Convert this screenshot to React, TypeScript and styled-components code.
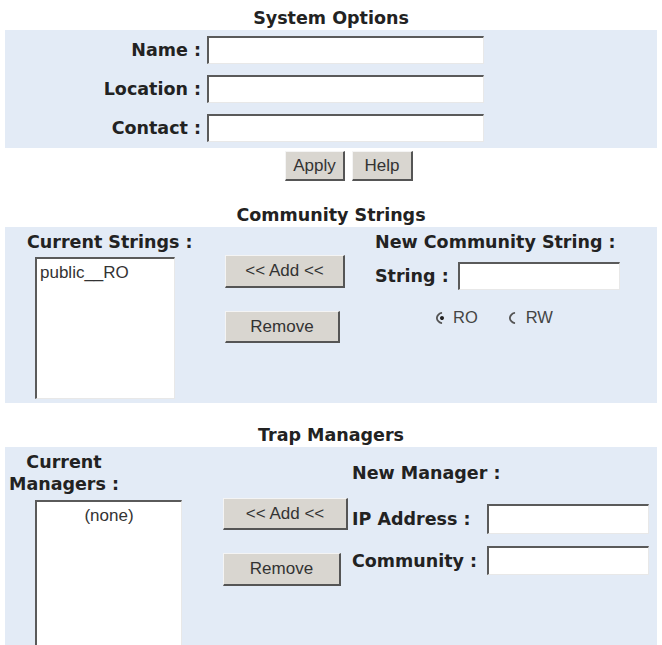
import styled, {createGlobalStyle} from 'styled-components';

const GlobalStyle = createGlobalStyle`
    body {
        margin: 0;
        background: #ffffff;
        color: #1e1e1e;
        font-family: "Liberation Sans", Arial, sans-serif;
    }
`;

const Page = styled.div`
    width: 662px;
    height: 645px;
    overflow: hidden;
`;

const Title = styled.div<{$top: number}>`
    margin-top: ${p => p.$top}px;
    height: 24px;
    line-height: 24px;
    text-align: center;
    font-family: "DejaVu Sans", Verdana, sans-serif;
    font-weight: bold;
    font-size: 17.5px;
    color: #222;
`;

const Panel = styled.div`
    margin: 0 5px;
    background: #e3ebf6;
`;

const Label = styled.span`
    font-family: "DejaVu Sans", Verdana, sans-serif;
    font-weight: bold;
    font-size: 17.5px;
    color: #222;
    white-space: nowrap;
`;

const TextInput = styled.input<{$w: number; $h: number}>`
    box-sizing: border-box;
    width: ${p => p.$w}px;
    height: ${p => p.$h}px;
    background: #fff;
    border-style: solid;
    border-width: 2px 1px 1px 2px;
    border-color: #5a5a5a #e8e8e8 #e8e8e8 #5a5a5a;
    outline: none;
    padding: 0 3px;
    font-size: 16px;
`;

const ListBox = styled.div<{$w: number; $h: number; $center?: boolean}>`
    box-sizing: border-box;
    width: ${p => p.$w}px;
    height: ${p => p.$h}px;
    background: #fff;
    border-style: solid;
    border-width: 2px 1px 1px 2px;
    border-color: #5a5a5a #e8e8e8 #e8e8e8 #5a5a5a;
    padding: 4px 3px;
    font-size: 17px;
    line-height: 20px;
    text-align: ${p => (p.$center ? 'center' : 'left')};
    color: #333;
`;

const Button = styled.button<{$w: number; $h: number}>`
    box-sizing: border-box;
    width: ${p => p.$w}px;
    height: ${p => p.$h}px;
    background: #d9d6d0;
    border-style: solid;
    border-width: 1px 2px 2px 1px;
    border-color: #f4f4f4 #555 #555 #f4f4f4;
    font-family: "Liberation Sans", Arial, sans-serif;
    font-size: 17px;
    color: #333;
    padding: 0;
    cursor: pointer;
`;

/* System options */

const OptionsGrid = styled.div`
    display: grid;
    grid-template-columns: 196px auto;
    column-gap: 6px;
    row-gap: 11px;
    align-items: center;
    padding: 6px 0 6px;
`;

const RightLabel = styled(Label)`
    text-align: right;
`;

const ButtonRow = styled.div`
    display: flex;
    justify-content: center;
    gap: 7px;
    padding-left: 36px;
    margin-top: 3px;
`;

/* Community / trap panels */

const SplitPanel = styled(Panel)<{$h: number}>`
    display: flex;
    height: ${p => p.$h}px;
`;

const Column = styled.div<{$w: number; $pl: number}>`
    width: ${p => p.$w}px;
    padding-left: ${p => p.$pl}px;
    box-sizing: border-box;
    display: flex;
    flex-direction: column;
`;

const ColumnHead = styled(Label)<{$mt: number}>`
    margin-top: ${p => p.$mt}px;
    line-height: 22px;
`;

const StackedHead = styled(Label)`
    width: 112px;
    margin-top: 4px;
    text-align: center;
    line-height: 22px;
`;

const Spaced = styled.div<{$mt: number; $ml?: number}>`
    margin-top: ${p => p.$mt}px;
    margin-left: ${p => p.$ml ?? 0}px;
`;

const FieldRow = styled.div<{$mt: number; $lw: number}>`
    display: grid;
    grid-template-columns: ${p => p.$lw}px auto;
    column-gap: 7px;
    align-items: center;
    margin-top: ${p => p.$mt}px;
`;

const RadioRow = styled.div`
    display: flex;
    align-items: center;
    margin-top: 18px;
    padding-left: 61px;
    font-size: 16.5px;
    color: #444;
`;

const RadioOption = styled.label`
    display: flex;
    align-items: center;
    gap: 5px;
    margin-right: 31px;
`;

const RadioMark = styled.span<{$on?: boolean}>`
    position: relative;
    box-sizing: border-box;
    width: 12px;
    height: 12px;
    border-radius: 50%;
    border: 2px solid;
    border-color: #555 transparent transparent #555;
    transform: rotate(-45deg);
    &::after {
        content: '';
        display: ${p => (p.$on ? 'block' : 'none')};
        position: absolute;
        left: 2px;
        top: 2px;
        width: 4px;
        height: 4px;
        border-radius: 50%;
        background: #222;
    }
`;

export default function App() {
    return (
        <Page>
            <GlobalStyle />
            <Title $top={6}>System Options</Title>
            <Panel>
                <OptionsGrid>
                    <RightLabel>Name :</RightLabel>
                    <TextInput $w={277} $h={28} />
                    <RightLabel>Location :</RightLabel>
                    <TextInput $w={277} $h={28} />
                    <RightLabel>Contact :</RightLabel>
                    <TextInput $w={277} $h={28} />
                </OptionsGrid>
            </Panel>
            <ButtonRow>
                <Button $w={60} $h={30}>Apply</Button>
                <Button $w={61} $h={30}>Help</Button>
            </ButtonRow>

            <Title $top={22}>Community Strings</Title>
            <SplitPanel $h={176}>
                <Column $w={215} $pl={22}>
                    <ColumnHead $mt={4}>Current Strings :</ColumnHead>
                    <Spaced $mt={4} $ml={8}>
                        <ListBox $w={140} $h={142}>public__RO</ListBox>
                    </Spaced>
                </Column>
                <Column $w={150} $pl={5}>
                    <Spaced $mt={28}>
                        <Button $w={120} $h={33}>&lt;&lt; Add &lt;&lt;</Button>
                    </Spaced>
                    <Spaced $mt={23}>
                        <Button $w={115} $h={32}>Remove</Button>
                    </Spaced>
                </Column>
                <Column $w={287} $pl={5}>
                    <ColumnHead $mt={4}>New Community String :</ColumnHead>
                    <FieldRow $mt={9} $lw={76}>
                        <Label>String :</Label>
                        <TextInput $w={162} $h={28} />
                    </FieldRow>
                    <RadioRow>
                        <RadioOption><RadioMark $on />RO</RadioOption>
                        <RadioOption><RadioMark />RW</RadioOption>
                    </RadioRow>
                </Column>
            </SplitPanel>

            <Title $top={20}>Trap Managers</Title>
            <SplitPanel $h={200}>
                <Column $w={212} $pl={3}>
                    <StackedHead>Current<br />Managers :</StackedHead>
                    <Spaced $mt={5} $ml={27}>
                        <ListBox $w={147} $h={150} $center>(none)</ListBox>
                    </Spaced>
                </Column>
                <Column $w={133} $pl={6}>
                    <Spaced $mt={51}>
                        <Button $w={125} $h={32}>&lt;&lt; Add &lt;&lt;</Button>
                    </Spaced>
                    <Spaced $mt={23}>
                        <Button $w={118} $h={33}>Remove</Button>
                    </Spaced>
                </Column>
                <Column $w={307} $pl={2}>
                    <ColumnHead $mt={15}>New Manager :</ColumnHead>
                    <FieldRow $mt={20} $lw={128}>
                        <Label>IP Address :</Label>
                        <TextInput $w={162} $h={30} />
                    </FieldRow>
                    <FieldRow $mt={12} $lw={128}>
                        <Label>Community :</Label>
                        <TextInput $w={162} $h={29} />
                    </FieldRow>
                </Column>
            </SplitPanel>
        </Page>
    );
}
